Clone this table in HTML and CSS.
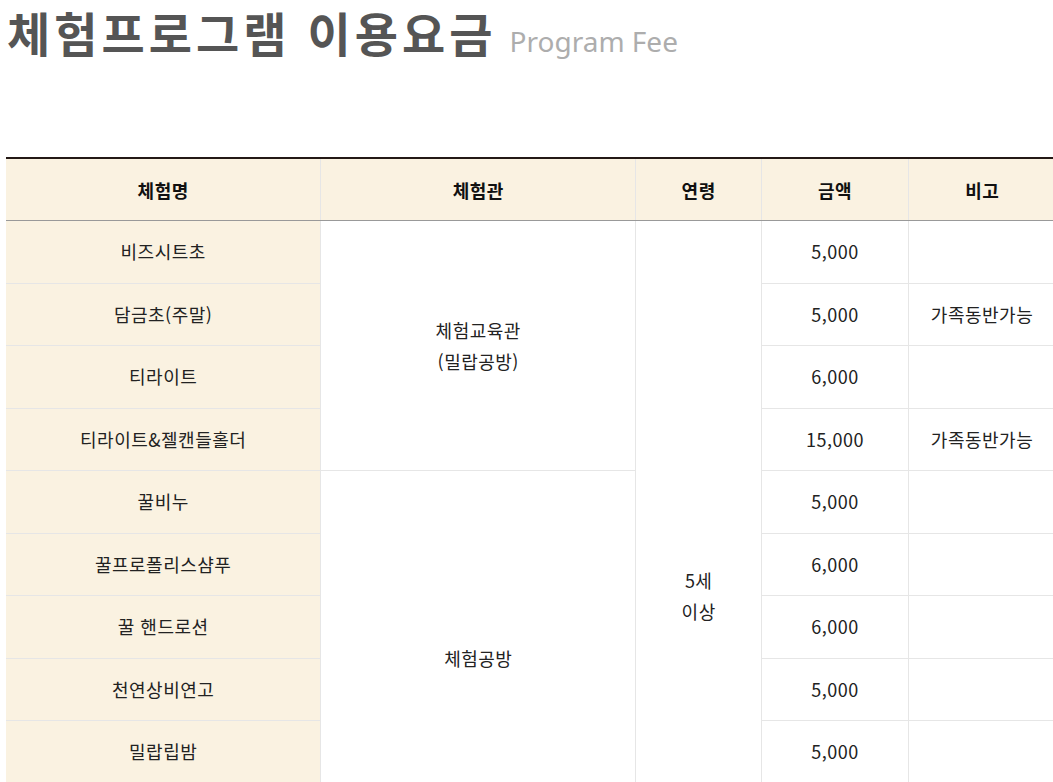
FILE: index.html
```html
<!DOCTYPE html>
<html lang="ko">
<head>
<meta charset="utf-8">
<title>체험프로그램 이용요금</title>
<link rel="stylesheet" href="styles.css">
</head>
<body>
<div class="page">
  <h2 class="title"><span class="main">체험프로그램 이용요금</span><span class="sub">Program Fee</span></h2>
  <table class="fee">
    <colgroup>
      <col class="c1"><col class="c2"><col class="c3"><col class="c4"><col class="c5">
    </colgroup>
    <thead>
      <tr><th>체험명</th><th>체험관</th><th>연령</th><th>금액</th><th>비고</th></tr>
    </thead>
    <tbody>
      <tr><td class="name">비즈시트초</td><td rowspan="4">체험교육관<br>(밀랍공방)</td><td rowspan="12">5세<br>이상</td><td>5,000</td><td></td></tr>
      <tr><td class="name">담금초(주말)</td><td>5,000</td><td>가족동반가능</td></tr>
      <tr><td class="name">티라이트</td><td>6,000</td><td></td></tr>
      <tr><td class="name">티라이트&amp;젤캔들홀더</td><td>15,000</td><td>가족동반가능</td></tr>
      <tr><td class="name">꿀비누</td><td rowspan="6">체험공방</td><td>5,000</td><td></td></tr>
      <tr><td class="name">꿀프로폴리스샴푸</td><td>6,000</td><td></td></tr>
      <tr><td class="name">꿀 핸드로션</td><td>6,000</td><td></td></tr>
      <tr><td class="name">천연상비연고</td><td>5,000</td><td></td></tr>
      <tr><td class="name">밀랍립밤</td><td>5,000</td><td></td></tr>
      <tr><td class="name">천연모기퇴치제</td><td>5,000</td><td></td></tr>
      <tr><td class="name">벌꿀화분만들기</td><td rowspan="2">야외체험장</td><td>5,000</td><td></td></tr>
      <tr><td class="name">꿀벌관찰</td><td>3,000</td><td></td></tr>
    </tbody>
  </table>
</div>
</body>
</html>
```
FILE: styles.css
```css
html { overflow: hidden; }
body {
  margin: 0;
  background: #fff;
  font-family: "Noto Sans CJK KR", "Noto Sans", sans-serif;
}
.page {
  padding: 0 0 0 6px;
}
.title {
  margin: 0;
  padding: 0 0 0 1px;
  height: 157px;
  box-sizing: border-box;
  display: flex;
  align-items: baseline;
  gap: 17px;
  font-weight: 700;
  white-space: nowrap;
}
.main {
  font-size: 47px;
  line-height: 64px;
  color: #555;
  letter-spacing: 4px;
  margin-right: -4px;
}
.sub {
  font-family: "Noto Sans", sans-serif;
  font-weight: 400;
  font-size: 28px;
  line-height: 40px;
  color: #adadad;
}
.fee {
  width: 1050px;
  border-collapse: collapse;
  table-layout: fixed;
  border-top: 2px solid #231815;
  font-size: 18px;
  letter-spacing: 0.5px;
  color: #222;
}
.c1, .c2 { width: 30%; }
.c3 { width: 12%; }
.c4, .c5 { width: 14%; }
.fee th {
  height: 61px;
  padding: 0;
  background: #faf2e1;
  font-weight: 700;
  color: #111;
  border-left: 1px solid #e6e6e6;
  border-bottom: 1px solid #999;
}
.fee th:first-child { border-left: none; }
.fee td {
  height: 61.5px;
  padding: 0;
  text-align: center;
  line-height: 31px;
  border: 1px solid #e6e6e6;
}
.fee td.name {
  background: #faf2e1;
  border-left: none;
}
```
